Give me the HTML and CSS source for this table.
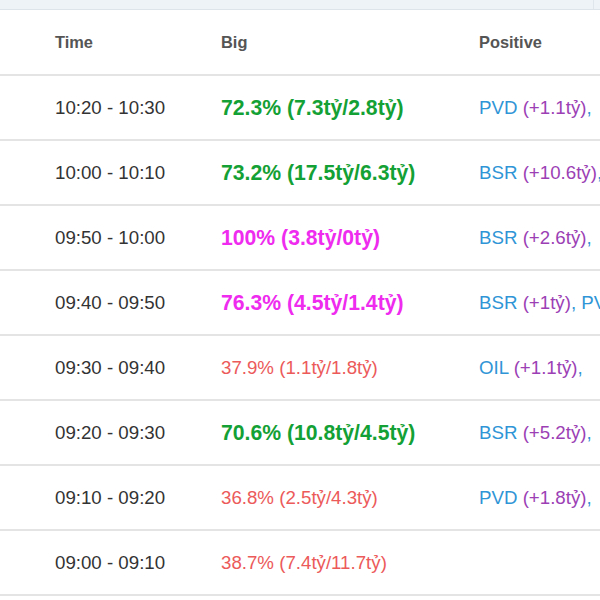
FILE: index.html
```html
<!DOCTYPE html>
<html>
<head>
<meta charset="utf-8">
<link rel="stylesheet" href="styles.css">
</head>
<body>
<div class="topbar"><span class="topbar-edge"></span></div>
<div class="wrap">
<table class="flow">
  <colgroup><col class="c-time"><col class="c-big"><col class="c-pos"></colgroup>
  <thead>
    <tr><th>Time</th><th>Big</th><th>Positive</th></tr>
  </thead>
  <tbody>
    <tr><td class="time">10:20 - 10:30</td><td class="big up">72.3% (7.3tỷ/2.8tỷ)</td><td class="pos"><span class="tk">PVD</span> <span class="amt">(+1.1tỷ)</span>,</td></tr>
    <tr><td class="time">10:00 - 10:10</td><td class="big up">73.2% (17.5tỷ/6.3tỷ)</td><td class="pos"><span class="tk">BSR</span> <span class="amt">(+10.6tỷ)</span>,</td></tr>
    <tr><td class="time">09:50 - 10:00</td><td class="big hot">100% (3.8tỷ/0tỷ)</td><td class="pos"><span class="tk">BSR</span> <span class="amt">(+2.6tỷ)</span>,</td></tr>
    <tr><td class="time">09:40 - 09:50</td><td class="big hot">76.3% (4.5tỷ/1.4tỷ)</td><td class="pos"><span class="tk">BSR</span> <span class="amt">(+1tỷ)</span>, <span class="tk">PVD</span></td></tr>
    <tr><td class="time">09:30 - 09:40</td><td class="small down">37.9% (1.1tỷ/1.8tỷ)</td><td class="pos"><span class="tk">OIL</span> <span class="amt">(+1.1tỷ)</span>,</td></tr>
    <tr><td class="time">09:20 - 09:30</td><td class="big up">70.6% (10.8tỷ/4.5tỷ)</td><td class="pos"><span class="tk">BSR</span> <span class="amt">(+5.2tỷ)</span>,</td></tr>
    <tr><td class="time">09:10 - 09:20</td><td class="small down">36.8% (2.5tỷ/4.3tỷ)</td><td class="pos"><span class="tk">PVD</span> <span class="amt">(+1.8tỷ)</span>,</td></tr>
    <tr><td class="time">09:00 - 09:10</td><td class="small down">38.7% (7.4tỷ/11.7tỷ)</td><td class="pos"></td></tr>
  </tbody>
</table>
</div>
</body>
</html>
```
FILE: styles.css
```css
html, body {
  margin: 0;
  padding: 0;
  background: #ffffff;
}
body {
  font-family: "Liberation Sans", Arial, Helvetica, sans-serif;
  width: 600px;
  height: 600px;
  overflow: hidden;
}
.topbar {
  height: 9px;
  background: #eef3f7;
  border-bottom: 1px solid #dde4ea;
  position: relative;
}
.topbar-edge {
  position: absolute;
  right: 6px;
  top: 0;
  width: 1px;
  height: 9px;
  background: #dfe6ec;
}
.wrap {
  width: 600px;
  overflow: hidden;
}
.flow {
  border-collapse: collapse;
  table-layout: fixed;
  width: 760px;
}
.c-time { width: 221px; }
.c-big { width: 258px; }
.c-pos { width: 281px; }
.flow th, .flow td {
  text-align: left;
  vertical-align: middle;
  white-space: nowrap;
  overflow: hidden;
  padding: 0;
  border-bottom: 2px solid #e4e4e4;
  height: 63px;
}
.flow th {
  height: 64px;
}
.flow th:first-child, .flow td:first-child {
  padding-left: 55px;
}
.flow th {
  font-size: 16.4px;
  font-weight: bold;
  color: #555555;
}
.time {
  font-size: 18.7px;
  color: #333333;
}
.big {
  font-size: 21.2px;
  font-weight: bold;
}
.small {
  font-size: 18.7px;
}
.up { color: #13a034; }
.hot { color: #ee2bee; }
.down { color: #ec5a5a; }
.pos {
  font-size: 18.7px;
  color: #2f95d6;
}
.tk { color: #2f95d6; }
.amt { color: #9c3fb5; }
```
